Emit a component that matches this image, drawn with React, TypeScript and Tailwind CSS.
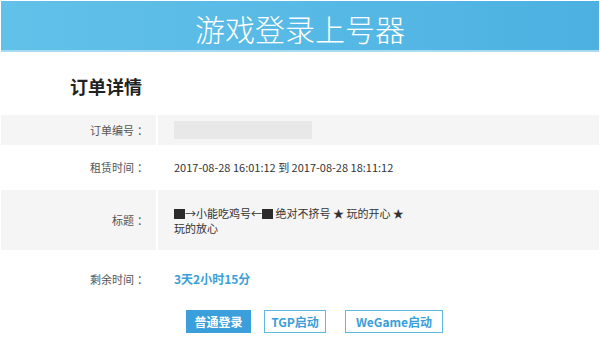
import React from "react";

const font = { fontFamily: '"Noto Sans CJK SC", "Noto Sans", sans-serif' };

function Row({
  label,
  gray,
  h,
  children,
}: {
  label: string;
  gray?: boolean;
  h: string;
  children: React.ReactNode;
}) {
  const bg = gray ? "bg-[#f5f5f5]" : "bg-white";
  return (
    <div className={`flex ${h} mx-[1px]`}>
      <div className={`w-[155px] shrink-0 flex items-center justify-end pr-[8px] text-[11px] text-[#555] ${bg}`}>
        <span>{label}</span>
        <span className="ml-[3px]">：</span>
      </div>
      <div className={`flex-1 ml-[2px] flex items-center pl-[16px] text-[11px] text-[#333] ${bg}`}>
        {children}
      </div>
    </div>
  );
}

function Sq() {
  return <span className="inline-block w-[11px] h-[10px] bg-[#2a2a2a] align-[-1px]" />;
}

export default function App() {
  return (
    <div className="w-[600px] h-[349px] bg-white overflow-hidden" style={font}>
      <div className="mx-[1px] mt-[1px] h-[51px] bg-gradient-to-r from-[#62c1e9] to-[#4cb1e1] border-b-[2px] border-[#a8dbf1] flex items-center justify-center">
        <span className="text-[30px] leading-none text-white font-light mt-[4px]">游戏登录上号器</span>
      </div>
      <div className="pl-[70px] pt-[22px] pb-[16px] h-[63px]">
        <span className="text-[18px] leading-[24px] font-bold text-[#222]">订单详情</span>
      </div>
      <Row label="订单编号" gray h="h-[30px]">
        <div className="w-[138px] h-[18px] bg-[#e8e8e8]" />
      </Row>
      <Row label="租赁时间" h="h-[45px]">
        <span>2017-08-28 16:01:12 到 2017-08-28 18:11:12</span>
      </Row>
      <Row label="标题" gray h="h-[60px]">
        <span className="leading-[15px] mt-[2px]">
          <Sq />→小能吃鸡号←<Sq /> 绝对不挤号 ★ 玩的开心 ★
          <br />
          玩的放心
        </span>
      </Row>
      <Row label="剩余时间" h="h-[58px]">
        <span className="text-[12px] font-bold text-[#3a9fd8]">3天2小时15分</span>
      </Row>
      <div className="flex pl-[186px] mt-[2px]">
        <button className="h-[23px] w-[65px] bg-[#3a9fdb] text-white text-[12px] font-bold flex items-center justify-center">
          普通登录
        </button>
        <button className="ml-[13px] h-[23px] w-[62px] border border-[#62b6e0] text-[#3a9fd8] text-[12px] font-bold flex items-center justify-center">
          TGP启动
        </button>
        <button className="ml-[19px] h-[23px] w-[98px] border border-[#62b6e0] text-[#3a9fd8] text-[12px] font-bold flex items-center justify-center">
          WeGame启动
        </button>
      </div>
    </div>
  );
}
